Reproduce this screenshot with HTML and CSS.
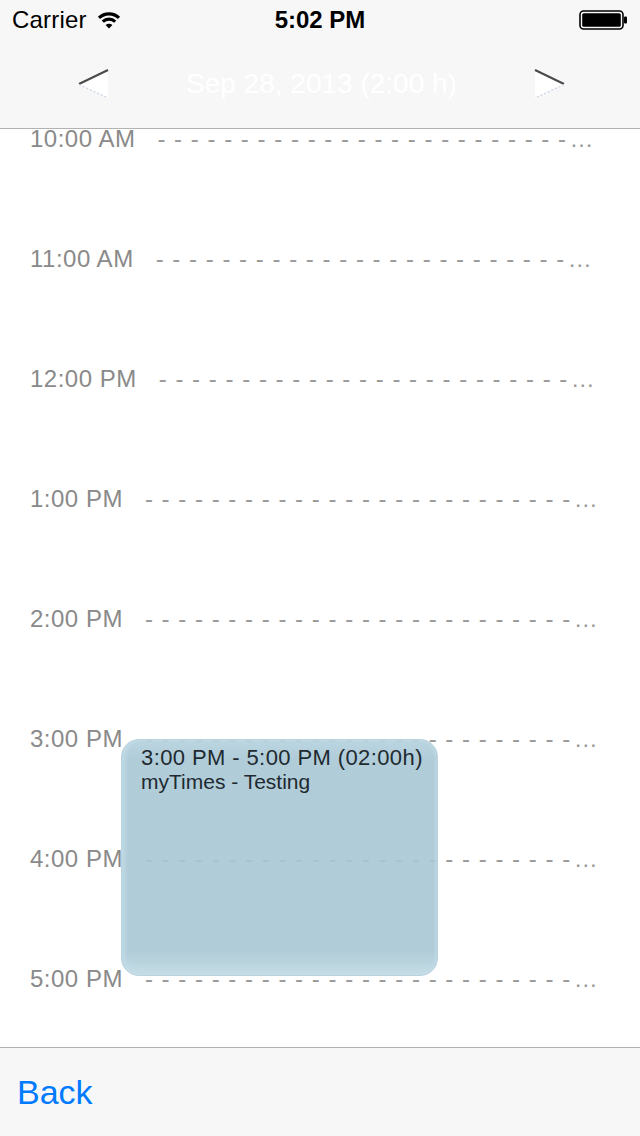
FILE: index.html
```html
<!DOCTYPE html>
<html>
<head>
<meta charset="utf-8">
<link rel="stylesheet" href="styles.css">
</head>
<body>
<div class="app">
  <header class="header">
    <div class="status">
      <div class="status-left">
        <span class="carrier">Carrier</span>
        <svg class="wifi" width="24" height="19" viewBox="0 0 24 19">
          <path d="M2 7.8 A14.5 14.5 0 0 1 22 7.8" fill="none" stroke="#000" stroke-width="3.2"/>
          <path d="M5.8 11.6 A9.2 9.2 0 0 1 18.2 11.6" fill="none" stroke="#000" stroke-width="3.2"/>
          <path d="M12 18.6 L8.6 15.1 A4.9 4.9 0 0 1 15.4 15.1 Z" fill="#000"/>
        </svg>
      </div>
      <div class="clock">5:02 PM</div>
      <div class="status-right">
        <svg class="battery" width="49" height="20" viewBox="0 0 49 20">
          <rect x="1" y="1" width="43" height="18" rx="3.5" fill="none" stroke="#000" stroke-width="1.6"/>
          <rect x="3.2" y="3.2" width="38.6" height="13.6" rx="1.6" fill="#000"/>
          <rect x="45" y="6.5" width="3" height="7" rx="1" fill="#000"/>
        </svg>
      </div>
    </div>
    <nav class="nav">
      <svg class="arrow" width="34" height="32" viewBox="0 0 34 32">
        <polygon points="31,2 2,16 31,30" fill="#ffffff"/>
        <line x1="31" y1="2" x2="2" y2="16" stroke="#4a4a4a" stroke-width="2"/>
        <line x1="2" y1="16.5" x2="31" y2="30" stroke="#c9d3e6" stroke-width="1.2" stroke-dasharray="2 2"/>
      </svg>
      <div class="nav-title">Sep 28, 2013 (2:00 h)</div>
      <svg class="arrow" width="34" height="32" viewBox="0 0 34 32">
        <polygon points="3,2 32,16 3,30" fill="#ffffff"/>
        <line x1="3" y1="2" x2="32" y2="16" stroke="#4a4a4a" stroke-width="2"/>
        <line x1="32" y1="16.5" x2="3" y2="30" stroke="#c9d3e6" stroke-width="1.2" stroke-dasharray="2 2"/>
      </svg>
    </nav>
  </header>

  <main class="schedule">
    <div class="hours">
      <div class="hour"><span class="hour-label">10:00 AM</span><span class="hour-line">------------------------<span class="tail">-…</span></span></div>
      <div class="hour"><span class="hour-label">11:00 AM</span><span class="hour-line">------------------------<span class="tail">-…</span></span></div>
      <div class="hour"><span class="hour-label">12:00 PM</span><span class="hour-line">------------------------<span class="tail">-…</span></span></div>
      <div class="hour"><span class="hour-label">1:00 PM</span><span class="hour-line">-------------------------<span class="tail">-…</span></span></div>
      <div class="hour"><span class="hour-label">2:00 PM</span><span class="hour-line">-------------------------<span class="tail">-…</span></span></div>
      <div class="hour"><span class="hour-label">3:00 PM</span><span class="hour-line">-------------------------<span class="tail">-…</span></span></div>
      <div class="hour"><span class="hour-label">4:00 PM</span><span class="hour-line">-------------------------<span class="tail">-…</span></span></div>
      <div class="hour"><span class="hour-label">5:00 PM</span><span class="hour-line">-------------------------<span class="tail">-…</span></span></div>
    </div>
    <div class="event">
      <div class="event-time">3:00 PM - 5:00 PM (02:00h)</div>
      <div class="event-title">myTimes - Testing</div>
    </div>
  </main>

  <footer class="footer">
    <span class="back">Back</span>
  </footer>
</div>
</body>
</html>
```

FILE: styles.css
```css
html, body {
  margin: 0;
  padding: 0;
}

body {
  font-family: "Liberation Sans", Arial, sans-serif;
  background: #ffffff;
}

.app {
  width: 640px;
  height: 1136px;
  display: flex;
  flex-direction: column;
  overflow: hidden;
}

.header {
  background: #f7f7f7;
  border-bottom: 1px solid #b2b2b2;
  flex: 0 0 auto;
}

.status {
  height: 40px;
  display: grid;
  grid-template-columns: 1fr auto 1fr;
  align-items: center;
  padding: 0 12px;
}

.status-left {
  display: flex;
  align-items: center;
  gap: 10px;
}

.carrier {
  font-size: 24px;
  letter-spacing: 0.2px;
  color: #000;
}

.wifi {
  display: block;
  margin-top: -2px;
}

.clock {
  font-size: 24px;
  font-weight: bold;
  color: #000;
}

.status-right {
  display: flex;
  justify-content: flex-end;
}

.battery {
  display: block;
}

.nav {
  height: 88px;
  display: flex;
  align-items: center;
  justify-content: space-between;
  padding: 0 74px 0 77px;
}

.arrow {
  display: block;
}

.nav-title {
  font-size: 28px;
  color: #ffffff;
}

.schedule {
  flex: 1 1 auto;
  position: relative;
  overflow: hidden;
  background: #ffffff;
}

.hours {
  margin-top: -4px;
}

.hour {
  height: 120px;
  display: flex;
  align-items: flex-start;
  padding: 0 30px 0 30px;
}

.hour-label {
  font-size: 24px;
  line-height: 28px;
  letter-spacing: 0.5px;
  color: #8a8a8a;
  white-space: nowrap;
}

.hour-line {
  margin-left: 22px;
  font-size: 24px;
  line-height: 28px;
  color: #9a9a9a;
  letter-spacing: 8.7px;
  white-space: nowrap;
}

.tail {
  letter-spacing: 3.5px;
}

.event {
  position: absolute;
  left: 121px;
  top: 610px;
  width: 317px;
  height: 237px;
  box-sizing: border-box;
  padding: 5px 0 0 19px;
  border-radius: 18px;
  border: 1px solid #b9d2dd;
  background: linear-gradient(to bottom, rgba(180,210,223,0.9) 0%, rgba(168,199,212,0.9) 8%, rgba(168,199,212,0.9) 90%, rgba(192,218,228,0.92) 100%);
  box-shadow: inset 3px 0 4px rgba(200,225,235,0.7), inset -2px 0 3px rgba(200,225,235,0.5);
  color: #1e2a30;
}

.event-time {
  font-size: 22px;
  line-height: 26px;
  letter-spacing: 0.4px;
}

.event-title {
  font-size: 21px;
  line-height: 22px;
}

.footer {
  flex: 0 0 88px;
  background: #f7f7f7;
  border-top: 1px solid #b2b2b2;
  display: flex;
  align-items: center;
  padding-left: 17px;
}

.back {
  font-size: 34px;
  color: #007aff;
}
```
